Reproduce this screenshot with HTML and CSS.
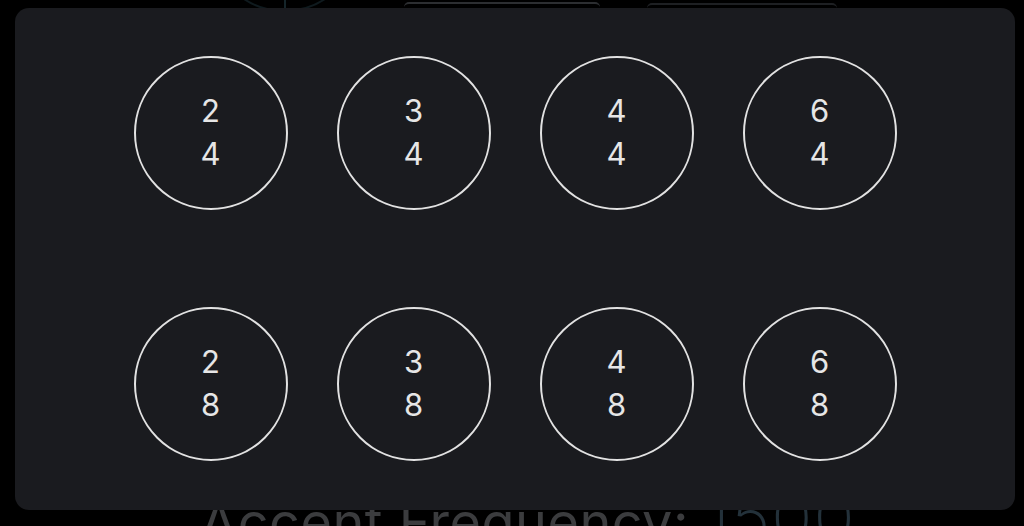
FILE: index.html
```html
<!DOCTYPE html>
<html lang="en">
<head>
<meta charset="utf-8">
<title>Time Signature</title>
<link rel="stylesheet" href="styles.css">
</head>
<body>
<div class="page">
  <div class="top-row">
    <div class="knob"><div class="knob-line"></div></div>
    <div class="pill"></div>
    <div class="pill pill-b"></div>
  </div>
  <div class="spacer"></div>
  <div class="freq"><span class="freq-label">Accent Frequency:</span> <span class="freq-value">1500</span></div>
</div>

<div class="modal">
  <div class="grid">
    <button class="sig"><span>2</span><span>4</span></button>
    <button class="sig"><span>3</span><span>4</span></button>
    <button class="sig"><span>4</span><span>4</span></button>
    <button class="sig"><span>6</span><span>4</span></button>
    <button class="sig"><span>2</span><span>8</span></button>
    <button class="sig"><span>3</span><span>8</span></button>
    <button class="sig"><span>4</span><span>8</span></button>
    <button class="sig"><span>6</span><span>8</span></button>
  </div>
</div>
</body>
</html>
```

FILE: styles.css
```css
html, body {
  margin: 0;
  padding: 0;
  background: #000;
  width: 1024px;
  height: 526px;
  overflow: hidden;
  font-family: Inter, "Noto Sans", "Liberation Sans", sans-serif;
}

.page {
  display: flex;
  flex-direction: column;
  height: 526px;
  overflow: hidden;
}

.top-row {
  display: flex;
  align-items: flex-end;
  height: 8px;
  padding-left: 210px;
}

.knob {
  width: 145px;
  height: 145px;
  margin-top: -137px;
  border-radius: 50%;
  border: 2px solid #0f1a1e;
  position: relative;
  flex: none;
  align-self: flex-start;
}

.knob-line {
  position: absolute;
  left: 72px;
  top: 100px;
  width: 2px;
  height: 45px;
  background: #15252a;
}

.pill {
  width: 196px;
  height: 3px;
  margin-left: 45px;
  border-top: 2px solid #2c2e31;
  border-radius: 12px 12px 0 0;
  align-self: flex-end;
  margin-bottom: 1px;
}

.pill-b {
  width: 190px;
  margin-left: 47px;
  border-top-color: #1e2023;
  margin-bottom: 0;
}

.spacer {
  flex: 1;
}

.freq {
  flex: none;
  padding-left: 200px;
  height: 33px;
  font-size: 54px;
  line-height: 60px;
  white-space: nowrap;
}

.freq-label {
  color: #3b3c3e;
  letter-spacing: 0.5px;
}

.freq-value {
  color: #23313a;
  font-weight: 200;
  font-size: 68px;
  line-height: 40px;
  letter-spacing: 1px;
}

.modal {
  position: absolute;
  left: 15px;
  top: 8px;
  width: 1000px;
  height: 502px;
  box-sizing: border-box;
  background: #1a1b1f;
  border-radius: 14px;
  display: flex;
  justify-content: center;
  padding-top: 48px;
}

.grid {
  display: grid;
  grid-template-columns: repeat(4, 154px);
  grid-auto-rows: 154px;
  column-gap: 49px;
  row-gap: 97px;
}

.sig {
  width: 154px;
  height: 154px;
  box-sizing: border-box;
  border: 2px solid #e2e2e2;
  border-radius: 50%;
  background: transparent;
  color: #e6e6e6;
  font-family: inherit;
  font-size: 31px;
  line-height: 43px;
  padding: 0 0 2px 0;
  display: flex;
  flex-direction: column;
  align-items: center;
  justify-content: center;
}
```
